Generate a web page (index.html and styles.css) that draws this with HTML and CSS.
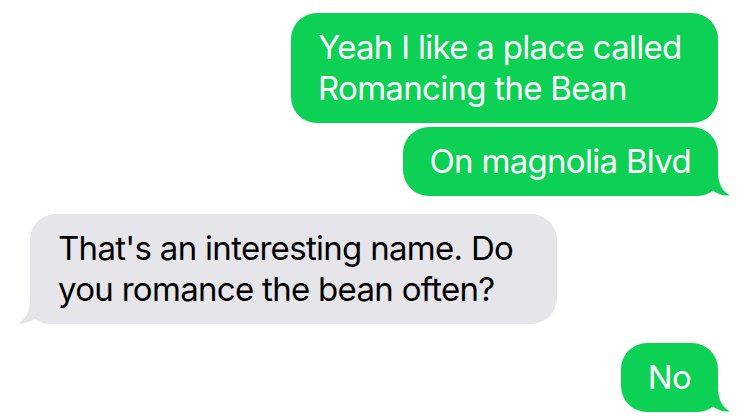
FILE: index.html
```html
<!DOCTYPE html>
<html lang="en">
<head>
    <meta charset="UTF-8">
    <meta name="viewport" content="width=device-width, initial-scale=1.0">
    <title>Messages</title>
    <link rel="stylesheet" href="styles.css">
</head>
<body>
<main class="thread">
    <div class="bubble sent">Yeah I like a place called Romancing the Bean</div>
    <div class="bubble sent close">
        On magnolia Blvd
        <svg class="tail-shape" viewBox="0 0 40 32" width="40" height="32"><path d="M0,0 H28 V6 C28,20 32,27 40,31.5 C33,32 27,29.5 23,26.5 C19,29.5 14,32 6,32 H0 Z"/></svg>
    </div>
    <div class="bubble received">
        That's an interesting name. Do you romance the bean often?
        <svg class="tail-shape" viewBox="0 0 40 32" width="40" height="32"><path d="M0,0 H28 V6 C28,20 32,27 40,31.5 C33,32 27,29.5 23,26.5 C19,29.5 14,32 6,32 H0 Z"/></svg>
    </div>
    <div class="bubble sent">
        No
        <svg class="tail-shape" viewBox="0 0 40 32" width="40" height="32"><path d="M0,0 H28 V6 C28,20 32,27 40,31.5 C33,32 27,29.5 23,26.5 C19,29.5 14,32 6,32 H0 Z"/></svg>
    </div>
</main>
</body>
</html>
```

FILE: styles.css
```css
body {
    margin: 0;
    padding: 0;
    background-color: #fff;
    font-family: 'Inter', 'Liberation Sans', sans-serif;
}

.thread {
    display: flex;
    flex-direction: column;
    padding: 13px 32px 0 30px;
}

.bubble {
    position: relative;
    box-sizing: border-box;
    padding: 14px 27px 14px 27px;
    border-radius: 26px;
    font-size: 33px;
    line-height: 41px;
    letter-spacing: -0.7px;
}

.sent {
    align-self: flex-end;
    max-width: 427px;
    background-color: #0cd155;
    color: #fff;
    margin-top: 19px;
}

.sent:first-child {
    margin-top: 0;
}

.sent.close {
    margin-top: 4px;
}

.received {
    align-self: flex-start;
    max-width: 527px;
    background-color: #e5e5ea;
    color: #000;
    margin-top: 18px;
    padding-left: 28px;
    padding-right: 26px;
}

.tail-shape {
    position: absolute;
    bottom: 0;
    right: -12px;
}

.sent .tail-shape path {
    fill: #0cd155;
}

.received .tail-shape {
    right: auto;
    left: -12px;
    transform: scaleX(-1);
}

.received .tail-shape path {
    fill: #e5e5ea;
}
```
